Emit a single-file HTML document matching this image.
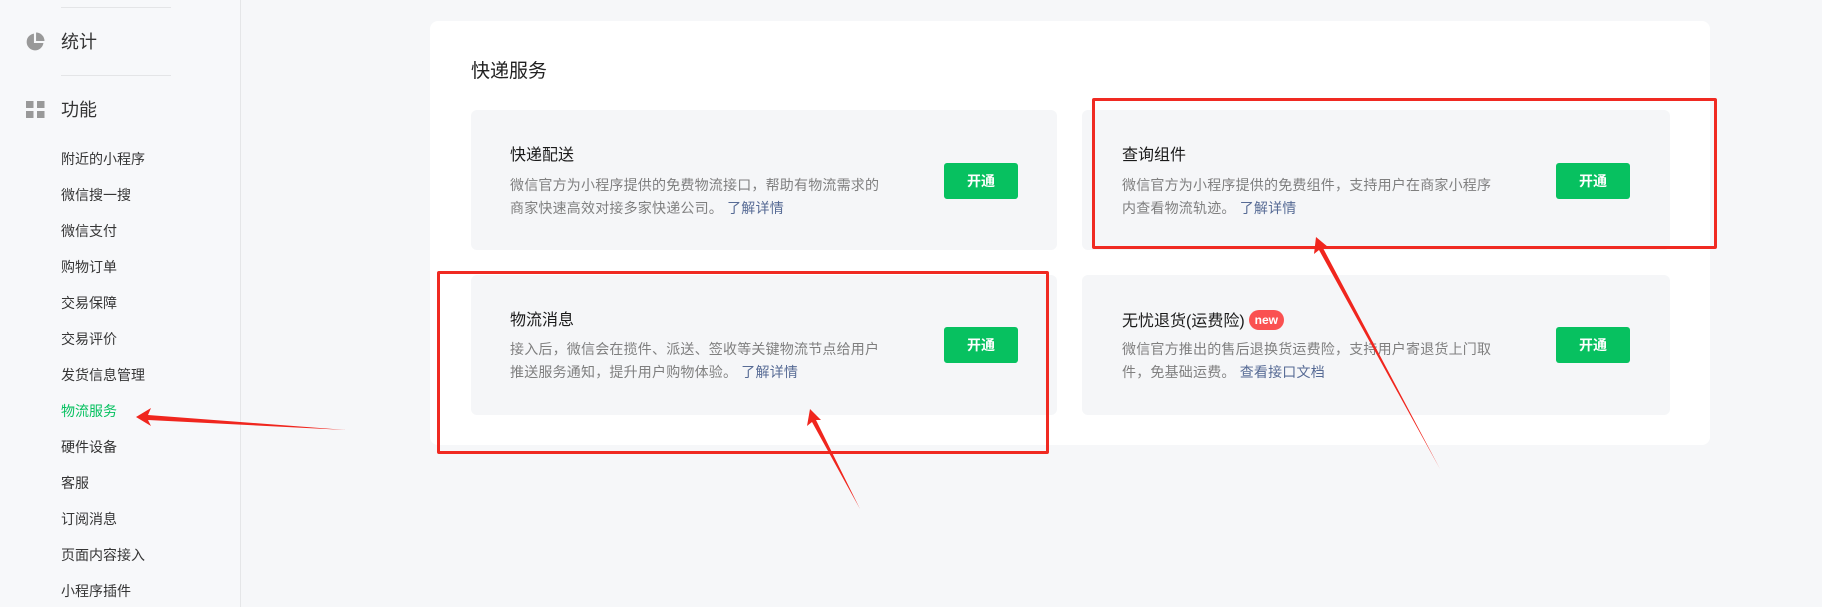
<!DOCTYPE html>
<html><head><meta charset="utf-8"><style>
*{margin:0;padding:0;box-sizing:border-box}
body{width:1822px;height:607px;overflow:hidden;background:#f6f7f9;font-family:"Liberation Sans","Noto Sans CJK SC",sans-serif;position:relative;color:#353535}
.side{position:absolute;left:0;top:0;width:241px;height:607px;background:#f7f8fa;border-right:1px solid #e5e6e8}
.hr{position:absolute;left:61px;width:110px;height:1px;background:#e4e5e7}
.sec{position:absolute;left:61px;font-size:18px;line-height:22px}
.it{position:absolute;left:61px;font-size:14px;line-height:18px;color:#353535}
.card{position:absolute;left:430px;top:21px;width:1280px;height:424px;background:#fff;border-radius:8px}
.h{position:absolute;left:471px;top:60px;font-size:19px;line-height:24px;color:#222}
.box{position:absolute;background:#f5f6f8;border-radius:6px}
.t{position:absolute;font-size:16px;line-height:20px;color:#1a1a1a}
.d{position:absolute;font-size:14px;line-height:23px;color:#7f7f7f;letter-spacing:0.2px}
.d a{color:#576b95;text-decoration:none}
.btn{position:absolute;width:74px;height:36px;background:#07c160;color:#fff;font-size:14px;font-weight:bold;text-align:center;line-height:36px;border-radius:3px}
.red{position:absolute;border:3px solid #f02a22;border-radius:2px}
.new{display:inline-block;vertical-align:2px;margin-left:4px;background:#fa5151;color:#fff;font-size:12px;font-weight:bold;border-radius:10px;padding:0 6px;line-height:20px;height:20px}
</style></head><body>
<div class="side">
<div class="hr" style="top:7px"></div>
<svg style="position:absolute;left:25px;top:32px" width="20" height="20" viewBox="0 0 19 19"><path d="M8.5 1.5A8 8 0 1 0 17.5 10.5H8.5Z" fill="#999"/><path d="M10.5 0.5A8 8 0 0 1 18.5 8.5H10.5Z" fill="#999"/></svg>
<div class="sec" style="top:31px">统计</div>
<div class="hr" style="top:75px"></div>
<svg style="position:absolute;left:26px;top:101px" width="19" height="17"><rect x="0" y="0" width="7.5" height="7" fill="#999"/><rect x="11" y="0" width="7.5" height="7" fill="#999"/><rect x="0" y="10" width="7.5" height="7" fill="#999"/><rect x="11" y="10" width="7.5" height="7" fill="#999"/></svg>
<div class="sec" style="top:99px">功能</div>
<div class="it" style="top:150px">附近的小程序</div>
<div class="it" style="top:186px">微信搜一搜</div>
<div class="it" style="top:222px">微信支付</div>
<div class="it" style="top:258px">购物订单</div>
<div class="it" style="top:294px">交易保障</div>
<div class="it" style="top:330px">交易评价</div>
<div class="it" style="top:366px">发货信息管理</div>
<div class="it" style="top:402px;color:#07c160">物流服务</div>
<div class="it" style="top:438px">硬件设备</div>
<div class="it" style="top:474px">客服</div>
<div class="it" style="top:510px">订阅消息</div>
<div class="it" style="top:546px">页面内容接入</div>
<div class="it" style="top:582px">小程序插件</div>
</div>
<div class="card"></div>
<div class="h">快递服务</div>

<div class="box" style="left:471px;top:110px;width:586px;height:140px"></div>
<div class="t" style="left:510px;top:146px">快递配送</div>
<div class="d" style="left:510px;top:174px">微信官方为小程序提供的免费物流接口，帮助有物流需求的<br>商家快速高效对接多家快递公司。 <a>了解详情</a></div>
<div class="btn" style="left:944px;top:163px">开通</div>

<div class="box" style="left:1082px;top:110px;width:588px;height:140px"></div>
<div class="t" style="left:1122px;top:146px">查询组件</div>
<div class="d" style="left:1122px;top:174px">微信官方为小程序提供的免费组件，支持用户在商家小程序<br>内查看物流轨迹。 <a>了解详情</a></div>
<div class="btn" style="left:1556px;top:163px">开通</div>

<div class="box" style="left:471px;top:275px;width:586px;height:140px"></div>
<div class="t" style="left:510px;top:311px">物流消息</div>
<div class="d" style="left:510px;top:338px">接入后，微信会在揽件、派送、签收等关键物流节点给用户<br>推送服务通知，提升用户购物体验。 <a>了解详情</a></div>
<div class="btn" style="left:944px;top:327px">开通</div>

<div class="box" style="left:1082px;top:275px;width:588px;height:140px"></div>
<div class="t" style="left:1122px;top:310px">无忧退货(运费险)<span class="new">new</span></div>
<div class="d" style="left:1122px;top:338px">微信官方推出的售后退换货运费险，支持用户寄退货上门取<br>件，免基础运费。 <a>查看接口文档</a></div>
<div class="btn" style="left:1556px;top:327px">开通</div>

<div class="red" style="left:437px;top:271px;width:612px;height:183px"></div>
<div class="red" style="left:1092px;top:98px;width:625px;height:151px"></div>

<svg style="position:absolute;left:0;top:0" width="1822" height="607">
<g fill="#f0261e">
<polygon points="136,417 151,408 148,415 346,430 148,420 151,426"/>
<polygon points="810,409 821,420 816,420 860,509 812,422 807,426"/>
<polygon points="1316,237 1328,247 1323,248 1440,469 1319,250 1314,254"/>
</g>
</svg>
</body></html>
